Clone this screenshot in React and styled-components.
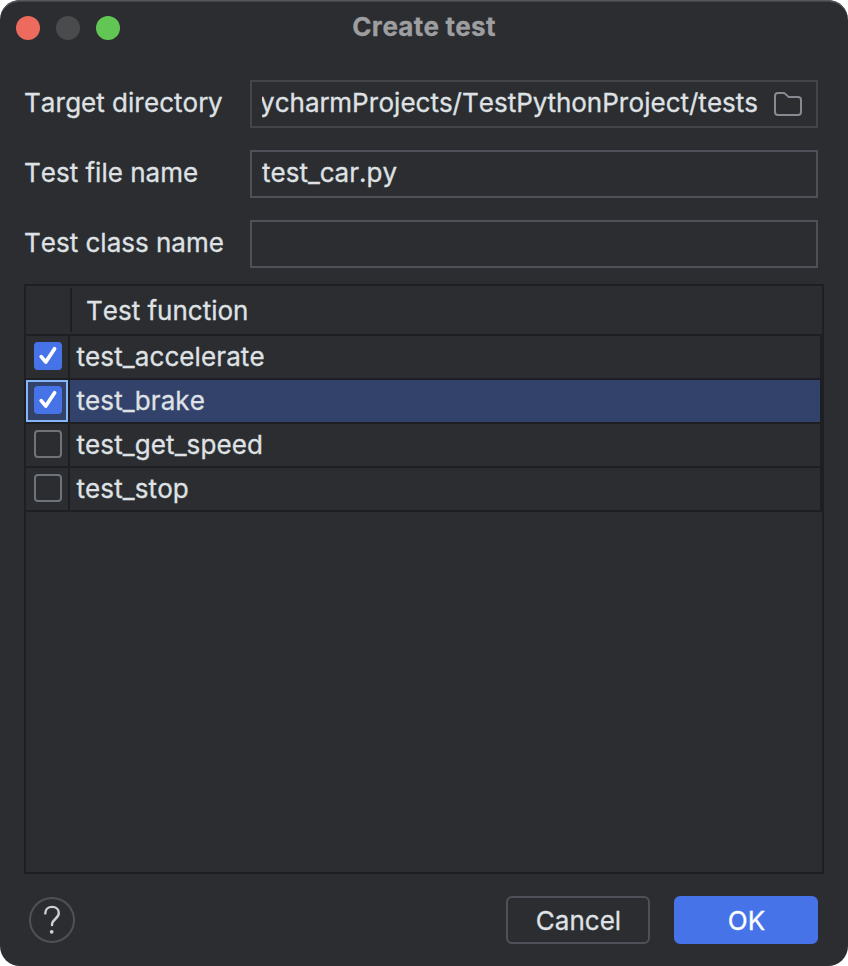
import React, { useState } from "react";
import styled, { createGlobalStyle } from "styled-components";

const GlobalStyle = createGlobalStyle`
    * {
        box-sizing: border-box;
    }
    body {
        margin: 0;
        background: #ffffff;
        font-family: Inter, "Liberation Sans", sans-serif;
        font-size: 26px;
        font-kerning: none;
        -webkit-text-stroke: 0.3px;
        color: #dfe1e5;
    }
`;

const Dialog = styled.div`
    width: 848px;
    height: 966px;
    display: flex;
    flex-direction: column;
    background: #2b2d30;
    border-radius: 20px;
    box-shadow: inset 0 2px 0 -0.5px #56585b;
    overflow: hidden;
`;
const TitleBar = styled.header`
    height: 56px;
    display: grid;
    grid-template-columns: 120px 1fr 120px;
    align-items: center;
    padding: 0 16px;
`;
const Lights = styled.div`
    display: flex;
    gap: 16px;
`;
const Light = styled.span`
    width: 24px;
    height: 24px;
    border-radius: 50%;
    background: ${(props) => props.$color};
`;
const Title = styled.h1`
    margin: 0;
    padding-bottom: 2px;
    text-align: center;
    font-size: 26px;
    line-height: 32px;
    font-weight: 700;
    letter-spacing: 0.25px;
    color: #9d9ea0;
`;
const Form = styled.div`
    display: flex;
    flex-direction: column;
    gap: 22px;
    padding: 24px 30px 16px 24px;
`;
const Field = styled.div`
    display: grid;
    grid-template-columns: 226px minmax(0, 1fr);
    align-items: center;
    height: 48px;
`;
const Label = styled.label`
    line-height: 32px;
    padding-bottom: 2px;
    white-space: nowrap;
`;
const InputBox = styled.div`
    display: flex;
    align-items: center;
    height: 48px;
    padding: 0 13px 2px 10px;
    border: 2px solid ${(props) => (props.$dim ? "#43454a" : "#4e5157")};
`;
const Value = styled.div`
    flex: 1;
    min-width: 0;
    display: flex;
    justify-content: ${(props) => (props.$end ? "flex-end" : "flex-start")};
    overflow: hidden;
    white-space: nowrap;
    line-height: 32px;
`;
const FolderSvg = styled.svg`
    flex: none;
    margin: 2px 0 0 15px;
`;
const Table = styled.div`
    height: 590px;
    margin: 0 24px;
    border: 2px solid #1e1f22;
`;
const HeadRow = styled.div`
    display: flex;
    align-items: center;
    height: 50px;
    border-bottom: 2px solid #1e1f22;
`;
const HeadMark = styled.div`
    width: 46px;
    height: 44px;
    border-right: 2px solid #1e1f22;
`;
const HeadText = styled.div`
    padding: 2px 0 0 14px;
    line-height: 32px;
`;
const Row = styled.div`
    display: flex;
    height: 44px;
    border-bottom: 2px solid #1e1f22;
    border-right: 2px solid #1e1f22;
    background: ${(props) => (props.$selected ? "#33426a" : "transparent")};
`;
const CheckCell = styled.div`
    width: 42px;
    height: 42px;
    padding: ${(props) => (props.$focused ? "4px 6px" : "6px 8px")};
    border: ${(props) => (props.$focused ? "2px solid #84b6f8" : "none")};
`;
const NameCell = styled.div`
    flex: 1;
    padding-left: 6.5px;
    border-left: 2px solid #1e1f22;
    line-height: 42px;
    letter-spacing: 0.1px;
`;
const CheckBox = styled.div`
    display: flex;
    width: 28px;
    height: 28px;
    border-radius: 4px;
    border: ${(props) => (props.$checked ? "none" : "2px solid #6f737a")};
    background: ${(props) => (props.$checked ? "#4674e8" : "transparent")};
`;
const Footer = styled.footer`
    display: flex;
    align-items: center;
    gap: 24px;
    padding: 22px 30px 22px 29px;
`;
const Help = styled.button`
    display: flex;
    width: 46px;
    height: 46px;
    margin-right: auto;
    padding: 0;
    border: 2px solid #4e5157;
    border-radius: 50%;
    background: transparent;
`;
const Button = styled.button`
    width: 144px;
    height: 48px;
    padding: 2px 0 0 1px;
    border: 2px solid ${(props) => (props.$primary ? "#4674e8" : "#4e5157")};
    border-radius: 6px;
    background: ${(props) => (props.$primary ? "#4674e8" : "transparent")};
    color: ${(props) => (props.$primary ? "#ffffff" : "#dfe1e5")};
    font: inherit;
    font-kerning: none;
    line-height: 32px;
`;

const Folder = () => (
    <FolderSvg width="30" height="26" viewBox="0 0 30 26" fill="none">
        <path
            d="M2 5A3 3 0 0 1 5 2H10.2A3 3 0 0 1 12.3 2.9L15.6 6H25A3 3 0 0 1 28 9V21A3 3 0 0 1 25 24H5A3 3 0 0 1 2 21Z"
            stroke="#868a91"
            strokeWidth="2"
        />
    </FolderSvg>
);

const Check = () => (
    <svg width="28" height="28" viewBox="0 0 28 28" fill="none">
        <path
            d="M7.2 14.6L11.8 20L20.6 6.8"
            stroke="#ffffff"
            strokeWidth="3.7"
            strokeLinecap="round"
            strokeLinejoin="round"
        />
    </svg>
);

const Question = () => (
    <svg width="42" height="42" viewBox="0 0 42 42" fill="none">
        <path
            d="M14.3 14.4C14.3 10.6 17.2 7.9 21.1 7.9C25 7.9 27.8 10.4 27.8 14C27.8 16.7 26.4 18.2 24.3 20C22.2 21.8 21 23 21 26"
            stroke="#ced0d6"
            strokeWidth="2.4"
            strokeLinecap="round"
        />
        <circle cx="20.7" cy="32.8" r="1.9" fill="#ced0d6" />
    </svg>
);

const initialTests = [
    { name: "test_accelerate", checked: true },
    { name: "test_brake", checked: true },
    { name: "test_get_speed", checked: false },
    { name: "test_stop", checked: false },
];

const App = () => {
    const [tests, setTests] = useState(initialTests);
    const [selected, setSelected] = useState(1);

    const toggle = (index) => {
        setSelected(index);
        setTests(tests.map((el, i) => (i === index ? { ...el, checked: !el.checked } : el)));
    };

    return (
        <>
            <GlobalStyle />
            <Dialog>
                <TitleBar>
                    <Lights>
                        <Light $color="#ed6a5e" />
                        <Light $color="#4a4b4d" />
                        <Light $color="#62c655" />
                    </Lights>
                    <Title>Create test</Title>
                </TitleBar>
                <Form>
                    <Field>
                        <Label>Target directory</Label>
                        <InputBox $dim>
                            <Value $end>ycharmProjects/TestPythonProject/tests</Value>
                            <Folder />
                        </InputBox>
                    </Field>
                    <Field>
                        <Label>Test file name</Label>
                        <InputBox>
                            <Value>test_car.py</Value>
                        </InputBox>
                    </Field>
                    <Field>
                        <Label>Test class name</Label>
                        <InputBox />
                    </Field>
                </Form>
                <Table>
                    <HeadRow>
                        <HeadMark />
                        <HeadText>Test function</HeadText>
                    </HeadRow>
                    {tests.map((el, i) => (
                        <Row key={el.name} $selected={i === selected}>
                            <CheckCell $focused={i === selected} onClick={() => toggle(i)}>
                                <CheckBox $checked={el.checked}>{el.checked && <Check />}</CheckBox>
                            </CheckCell>
                            <NameCell onClick={() => setSelected(i)}>{el.name}</NameCell>
                        </Row>
                    ))}
                </Table>
                <Footer>
                    <Help aria-label="Help">
                        <Question />
                    </Help>
                    <Button>Cancel</Button>
                    <Button $primary>OK</Button>
                </Footer>
            </Dialog>
        </>
    );
};
export default App;
